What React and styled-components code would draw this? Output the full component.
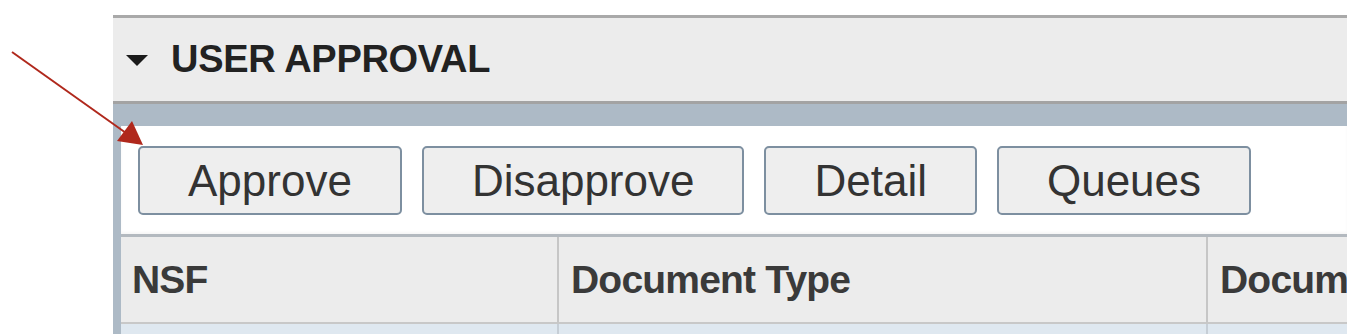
import React from 'react';
import styled, { createGlobalStyle } from "styled-components";

const GlobalStyle = createGlobalStyle`
    html, body {
        margin: 0;
        padding: 0;
        background: #FFFFFF;
        font-family: "Liberation Sans", Arial, sans-serif;
    }
`

const Page = styled.div`
    position: relative;
    width: 1352px;
    height: 334px;
    overflow: hidden;
    box-sizing: border-box;
    padding: 15px 5px 0 113px;
`

const Panel = styled.section`
    width: 100%;
    border-top: 3px solid #A9A9A9;
`

const PanelHeader = styled.div`
    height: 86px;
    display: flex;
    align-items: center;
    gap: 23px;
    padding-left: 13px;
    background: #ECECEC;
    border-bottom: 3px solid #A3A3A3;
    box-sizing: border-box;
`

const Caret = styled.span`
    width: 0;
    height: 0;
    border-left: 11px solid transparent;
    border-right: 11px solid transparent;
    border-top: 11px solid #1A1A1A;
    margin-top: 2px;
`

const PanelTitle = styled.h2`
    margin: 0;
    font-size: 38px;
    font-weight: 700;
    letter-spacing: -0.3px;
    color: #222222;
`

const PanelBody = styled.div`
    background: #ADBAC6;
    padding: 22px 0 0 8px;
`

const Content = styled.div`
    background: #FFFFFF;
`

const Toolbar = styled.div`
    display: flex;
    gap: 20px;
    padding: 20px 17px 19px;
    box-shadow: inset 0 -2px 3px rgba(0, 0, 0, 0.04);
`

const Button = styled.button`
    height: 69px;
    padding: 0 48px;
    background: #EEEEEE;
    border: 2px solid #7D8FA0;
    border-radius: 5px;
    font-family: "Liberation Sans", Arial, sans-serif;
    font-size: 44px;
    color: #333333;
    box-sizing: border-box;
    cursor: pointer;
`

const Grid = styled.div`
    display: grid;
    grid-template-columns: 436px 649px 1fr;
    border-top: 3px solid #B3B9BF;
`

const HeadCell = styled.div`
    height: 85px;
    display: flex;
    align-items: center;
    padding-left: ${props => props.first ? "11px" : "12px"};
    background: #ECECEC;
    border-left: ${props => props.first ? "none" : "2px solid #C6C6C6"};
    border-bottom: 2px solid #C8C8C8;
    font-size: 39px;
    font-weight: 700;
    letter-spacing: -0.8px;
    color: #3A3A3A;
    white-space: nowrap;
    overflow: hidden;
`

const Cell = styled.div`
    height: 20px;
    background: #DFE8F0;
    border-left: ${props => props.first ? "none" : "2px solid #C6CED6"};
`

const Pointer = styled.svg`
    position: absolute;
    left: 0;
    top: 0;
    pointer-events: none;
`

const buttons = ["Approve", "Disapprove", "Detail", "Queues"];
const columns = ["NSF", "Document Type", "Document"];

function App() {
    return (
        <Page>
            <GlobalStyle />
            <Panel>
                <PanelHeader>
                    <Caret />
                    <PanelTitle>USER APPROVAL</PanelTitle>
                </PanelHeader>
                <PanelBody>
                    <Content>
                        <Toolbar>
                            {buttons.map(label => <Button key={label}>{label}</Button>)}
                        </Toolbar>
                        <Grid>
                            {columns.map((col, i) => <HeadCell key={col} first={i === 0}>{col}</HeadCell>)}
                            {columns.map((col, i) => <Cell key={col + "-row"} first={i === 0} />)}
                        </Grid>
                    </Content>
                </PanelBody>
            </Panel>
            <Pointer width="160" height="160" viewBox="0 0 160 160">
                <line x1="12" y1="52" x2="126" y2="133" stroke="#B0281C" strokeWidth="2" />
                <polygon points="117,141 132,121 143,145" fill="#B0281C" />
            </Pointer>
        </Page>
    );
}

export default App;
